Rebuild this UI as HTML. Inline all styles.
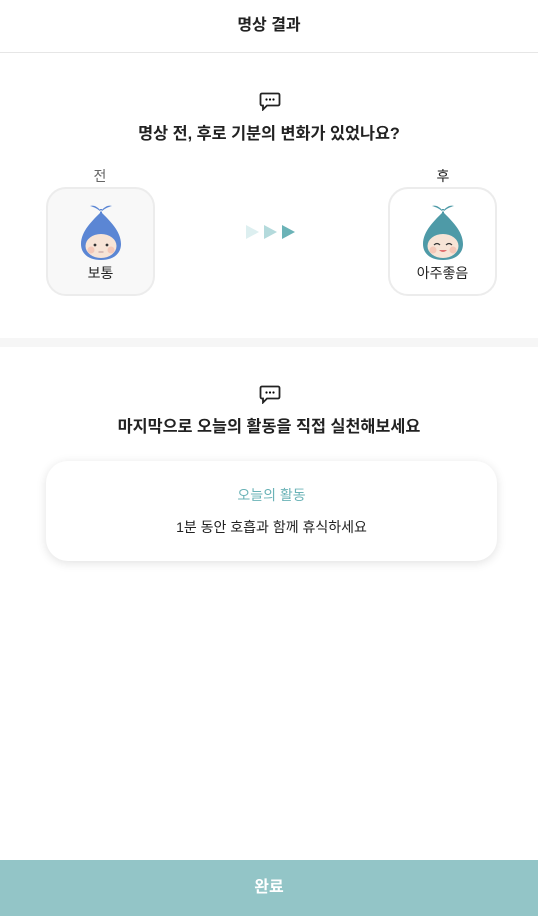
<!DOCTYPE html>
<html><head><meta charset="utf-8"><style>
*{margin:0;padding:0;box-sizing:border-box}
body{width:538px;height:916px;background:#fff;font-family:"Liberation Sans","Noto Sans CJK KR",sans-serif;color:#222;position:relative;overflow:hidden}
.hdr{height:53px;border-bottom:1px solid #e6e6e6;text-align:center;line-height:52px;font-size:16px;font-weight:bold}
.t{position:absolute;left:0;width:538px;text-align:center}
.ico{position:absolute;left:259px}
.card{position:absolute;width:109px;height:109px;border:2px solid #ececec;border-radius:20px;background:#f8f8f8}
.lbl{position:absolute;width:100%;text-align:center;top:74px;font-size:14px}
.sep{position:absolute;top:338px;left:0;width:538px;height:9px;background:#f6f6f6}
.act{position:absolute;left:46px;top:461px;width:451px;height:100px;border-radius:22px;background:#fff;box-shadow:0 2px 10px rgba(0,0,0,0.12)}
.btn{position:absolute;left:0;top:860px;width:538px;height:56px;background:#93c5c7;color:#fff;text-align:center;line-height:56px;font-size:16px;font-weight:bold}
</style></head><body>
<div class="hdr">명상 결과</div>
<svg class="ico" style="top:92px" width="22" height="19" viewBox="0 0 22 19"><path d="M3 1.5h16a1.5 1.5 0 0 1 1.5 1.5v9a1.5 1.5 0 0 1-1.5 1.5H8l-4 4v-4H3A1.5 1.5 0 0 1 1.5 12V3A1.5 1.5 0 0 1 3 1.5z" fill="none" stroke="#222" stroke-width="1.8"/><circle cx="7.5" cy="7.5" r="1.1"/><circle cx="11" cy="7.5" r="1.1"/><circle cx="14.5" cy="7.5" r="1.1"/></svg>
<div class="t" style="top:120px;font-size:16.3px;font-weight:bold">명상 전, 후로 기분의 변화가 있었나요?</div>
<div class="t" style="top:166px;left:-169px;font-size:14px;color:#666">전</div>
<div class="t" style="top:166px;left:174px;font-size:14px">후</div>
<div class="card" style="left:46px;top:187px">
<svg style="position:absolute;left:31px;top:14px" width="44" height="58" viewBox="0 0 44 58"><path d="M22 8 C18 3 14 2 11 3 C15 4 19 6 22 9 C25 6 29 4 33 3 C30 2 26 3 22 8z M21 6h2v5h-2z" fill="#5b86d4"/><path d="M22 9 C30 17 42 28 42 41 C42 51 34 57 22 57 C10 57 2 51 2 41 C2 28 14 17 22 9z" fill="#5b86d4"/><ellipse cx="22" cy="43" rx="15.5" ry="12" fill="#f7e4d6"/><circle cx="12" cy="47" r="3.5" fill="#f4c8b8"/><circle cx="32" cy="47" r="3.5" fill="#f4c8b8"/><circle cx="16" cy="42" r="1.4" fill="#333"/><circle cx="28" cy="42" r="1.4" fill="#333"/><path d="M19.5 49h5" stroke="#b99" stroke-width="1"/></svg>
<div class="lbl">보통</div></div>
<div class="card" style="left:388px;top:187px;background:#fff">
<svg style="position:absolute;left:31px;top:14px" width="44" height="58" viewBox="0 0 44 58"><path d="M22 8 C18 3 14 2 11 3 C15 4 19 6 22 9 C25 6 29 4 33 3 C30 2 26 3 22 8z M21 6h2v5h-2z" fill="#4e9aa7"/><path d="M22 9 C30 17 42 28 42 41 C42 51 34 57 22 57 C10 57 2 51 2 41 C2 28 14 17 22 9z" fill="#4e9aa7"/><ellipse cx="22" cy="43" rx="15.5" ry="12" fill="#f7e4d6"/><circle cx="12" cy="47" r="3.5" fill="#f4c8b8"/><circle cx="32" cy="47" r="3.5" fill="#f4c8b8"/><path d="M13 42q3-3 6 0M25 42q3-3 6 0" stroke="#333" stroke-width="1.2" fill="none"/><path d="M18 47q4 4 8 0z" fill="#e07070"/></svg>
<div class="lbl">아주좋음</div></div>
<svg style="position:absolute;left:246px;top:225px" width="50" height="14" viewBox="0 0 50 14"><path d="M0 0l13 7L0 14z" fill="#ddeff0"/><path d="M18 0l13 7L18 14z" fill="#b4dadc"/><path d="M36 0l13 7L36 14z" fill="#6bb3b7"/></svg>
<div class="sep"></div>
<svg class="ico" style="top:385px" width="22" height="19" viewBox="0 0 22 19"><path d="M3 1.5h16a1.5 1.5 0 0 1 1.5 1.5v9a1.5 1.5 0 0 1-1.5 1.5H8l-4 4v-4H3A1.5 1.5 0 0 1 1.5 12V3A1.5 1.5 0 0 1 3 1.5z" fill="none" stroke="#222" stroke-width="1.8"/><circle cx="7.5" cy="7.5" r="1.1"/><circle cx="11" cy="7.5" r="1.1"/><circle cx="14.5" cy="7.5" r="1.1"/></svg>
<div class="t" style="top:413px;font-size:16.3px;font-weight:bold">마지막으로 오늘의 활동을 직접 실천해보세요</div>
<div class="act"><div class="t" style="width:451px;top:24px;font-size:14px;color:#6bb3b7">오늘의 활동</div><div class="t" style="width:451px;top:56px;font-size:14px">1분 동안 호흡과 함께 휴식하세요</div></div>
<div class="btn">완료</div>
</body></html>
